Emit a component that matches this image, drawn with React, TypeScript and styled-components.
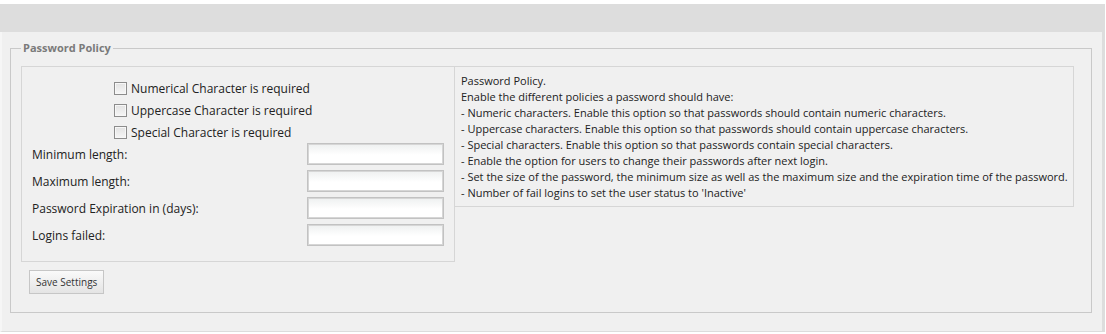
import React from "react";
import styled, { createGlobalStyle } from "styled-components";

const GlobalStyle = createGlobalStyle`
  html, body {
    margin: 0;
    padding: 0;
    background: #ffffff;
  }
  body {
    font-family: "Open Sans", "Liberation Sans", sans-serif;
    color: #222222;
  }
`;

const checkOptions = [
  "Numerical Character is required",
  "Uppercase Character is required",
  "Special Character is required",
];

const lengthFields = [
  "Minimum length:",
  "Maximum length:",
  "Password Expiration in (days):",
  "Logins failed:",
];

const helpLines = [
  "Password Policy.",
  "Enable the different policies a password should have:",
  "- Numeric characters. Enable this option so that passwords should contain numeric characters.",
  "- Uppercase characters. Enable this option so that passwords should contain uppercase characters.",
  "- Special characters. Enable this option so that passwords contain special characters.",
  "- Enable the option for users to change their passwords after next login.",
  "- Set the size of the password, the minimum size as well as the maximum size and the expiration time of the password.",
  "- Number of fail logins to set the user status to 'Inactive'",
];

const App = () => {
  return (
    <>
      <GlobalStyle />
      <Window>
        <HeaderBand />
        <Panel>
          <PolicyFieldset>
            <PolicyLegend>Password Policy</PolicyLegend>
            <Columns>
              <SettingsBox>
                {checkOptions.map((option) => (
                  <CheckRow key={option}>
                    <CheckBox type="checkbox" />
                    <span>{option}</span>
                  </CheckRow>
                ))}
                <FieldList>
                  {lengthFields.map((field) => (
                    <FieldRow key={field}>
                      <FieldLabel>{field}</FieldLabel>
                      <TextInput type="text" />
                    </FieldRow>
                  ))}
                </FieldList>
              </SettingsBox>
              <HelpBox>
                {helpLines.map((line) => (
                  <HelpLine key={line}>{line}</HelpLine>
                ))}
              </HelpBox>
            </Columns>
            <SaveButton>Save Settings</SaveButton>
          </PolicyFieldset>
        </Panel>
      </Window>
    </>
  );
};

export default App;

const Window = styled.div`
  width: 1105px;
  margin-top: 4px;
  background: #dddddd;
`;

const HeaderBand = styled.div`
  height: 28px;
  background: #dddddd;
`;

const Panel = styled.div`
  margin-right: 3px;
  padding: 8px 10px 18px 8px;
  background: #f0f0f0;
  border-left: 2px solid #f6f6f6;
  border-bottom: 1px solid #dcdcdc;
`;

const PolicyFieldset = styled.fieldset`
  margin: 0;
  padding: 10px 10px 18px 10px;
  border: 1px solid #c9c9c9;
  min-width: 0;
`;

const PolicyLegend = styled.legend`
  margin-left: 0;
  padding: 0 2px;
  font-size: 11px;
  font-weight: 700;
  line-height: 16px;
  color: #7a7a7a;
`;

const Columns = styled.div`
  display: flex;
  align-items: flex-start;
`;

const SettingsBox = styled.div`
  box-sizing: border-box;
  width: 434px;
  padding: 10px 10px 15px 10px;
  border: 1px solid #d6d6d6;
  font-size: 12px;
`;

const CheckRow = styled.label`
  display: flex;
  align-items: center;
  gap: 4px;
  height: 22px;
  padding-left: 82px;
  color: #222222;
`;

const CheckBox = styled.input`
  appearance: none;
  box-sizing: border-box;
  margin: 0;
  width: 13px;
  height: 13px;
  border: 1px solid #8c8c8c;
  background: linear-gradient(#e2e2e2, #f6f6f6);
  box-shadow: inset 0 0 0 1px #f7f7f7;
`;

const FieldList = styled.div`
  display: flex;
  flex-direction: column;
  gap: 5px;
`;

const FieldRow = styled.div`
  display: flex;
  align-items: center;
  justify-content: space-between;
  height: 22px;
`;

const FieldLabel = styled.span`
  color: #222222;
`;

const TextInput = styled.input`
  box-sizing: border-box;
  width: 137px;
  height: 22px;
  margin: 0;
  border: 1px solid #c2c2c2;
  box-shadow: inset 0 0 0 1px #d6d6d6;
  background: linear-gradient(#eef0f0, #ffffff 55%);
  outline: none;
`;

const HelpBox = styled.div`
  box-sizing: border-box;
  width: 619px;
  padding: 6px 6px 5px 6px;
  border: 1px solid #d6d6d6;
  border-left: none;
  font-size: 11px;
  line-height: 16px;
  color: #222222;
`;

const HelpLine = styled.div`
  white-space: nowrap;
`;

const SaveButton = styled.button`
  display: block;
  margin: 8px 0 0 8px;
  height: 24px;
  padding: 0 6px;
  border: 1px solid #c6c6c6;
  border-radius: 0;
  background: linear-gradient(#fafafa, #e4e4e4);
  font-family: "Open Sans", "Liberation Sans", sans-serif;
  font-size: 10px;
  color: #333333;
`;
